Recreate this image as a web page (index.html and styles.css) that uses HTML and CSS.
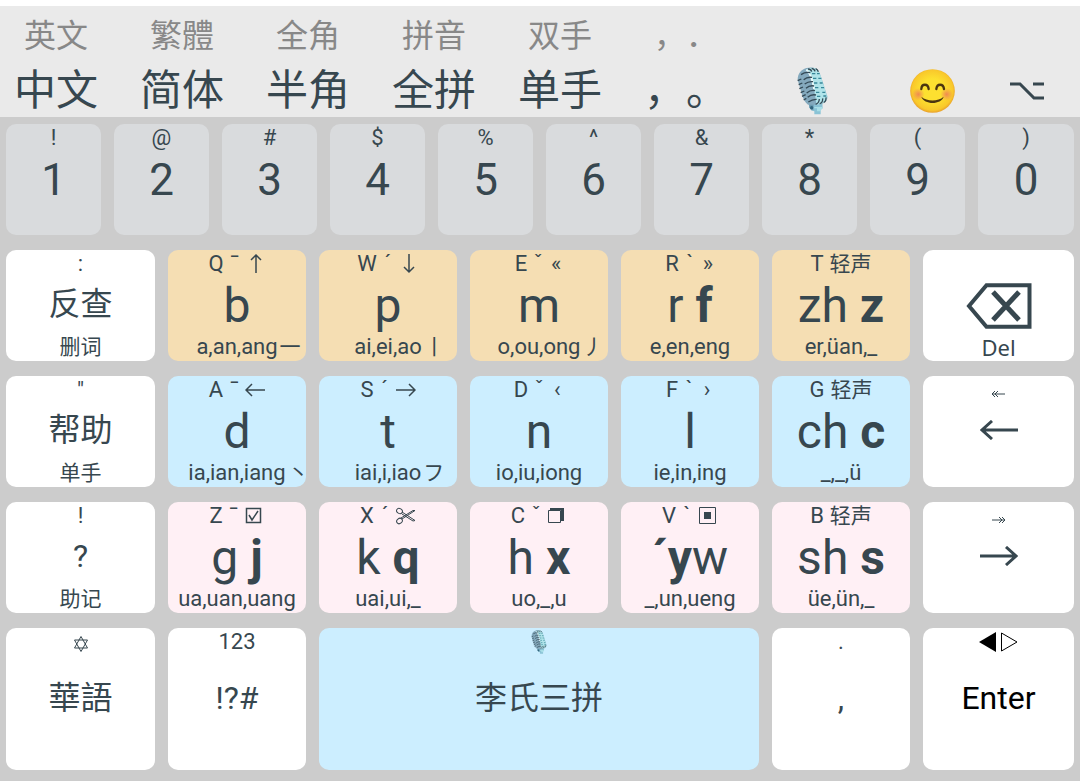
FILE: index.html
```html
<!DOCTYPE html>
<html lang="zh-CN">
<head>
<meta charset="utf-8">
<meta name="viewport" content="width=device-width, initial-scale=1">
<title>李氏三拼</title>
<link rel="stylesheet" href="styles.css">
</head>
<body>
<svg class="defs" aria-hidden="true">
  <symbol id="mic" viewBox="0 0 93 144">
    <path d="M46 110 L76 106 L77 124 L71 128 L71 142 L52 142 L52 133 L43 130 L37 122 L35 110Z" fill="#8ac3d6"/>
    <path d="M36 110 L50 112 L49 130 L43 130 L37 121Z" fill="#6b9ab0"/>
    <circle cx="44" cy="122" r="5" fill="#31647c"/>
    <path d="M52 120H76V125L71 129V133H60V124H52Z" fill="#a9dfe7"/>
    <path d="M2 38 C2 20 12 8 28 3 C45 -1 60 2 66 14 C73 30 84 66 91 88 C92 101 84 109 67 113 L33 113 C24 106 19 96 15 83Z" fill="#84a9bd"/>
    <path d="M28 8 C43 -1 60 1 66 14 C73 30 84 66 91 88 C92 101 82 111 58 113 C56 88 48 38 28 8Z" fill="#b0e4ea"/>
    <path d="M28 8 C42 20 46 40 51 66" fill="none" stroke="#eefbfc" stroke-width="5"/>
    <g fill="none" stroke="#344a56" stroke-width="4">
      <path d="M2 41L13 36M5 53L16 48M7 65L18 60M11 77L22 72M15 88L26 83M20 99L28 94M12 23Q25 14 40 17M20 38Q30 29 45 31M23 51Q35 42 48 44M27 64Q38 54 51 57M29 78Q41 68 54 71M32 91Q43 81 57 84M34 105Q47 96 59 97"/>
      <path d="M33 6Q42 6 44 14M44 4Q53 6 54 13M56 5Q62 8 64 14M56 112Q66 109 67 96M68 110Q78 107 77 94M80 106Q88 103 87 91" />
    </g>
    <g fill="none" stroke="#388799" stroke-width="4"><path d="M45 20H55M60 20H68M48 34H58M64 34H73M51 48H61M68 48H77M54 62H64M72 62H81M57 76H67M76 76H85M60 88H70M79 87H88"/></g>
  </symbol>
  <symbol id="left" viewBox="0 0 20 20"><path d="M20 10H1M7 4L1 10L7 16"/></symbol>
  <symbol id="right" viewBox="0 0 20 20"><path d="M0 10H19M13 4L19 10L13 16"/></symbol>
  <symbol id="up" viewBox="0 0 20 20"><path d="M10 19V1M5 6L10 1L15 6"/></symbol>
  <symbol id="down" viewBox="0 0 20 20"><path d="M10 0V18M5 13L10 18L15 13"/></symbol>
</svg>

<main class="keyboard">
  <div class="toolbar">
    <button class="tool"><span class="alt">英文</span><span class="current">中文</span></button>
    <button class="tool"><span class="alt" lang="zh-TW">繁體</span><span class="current">简体</span></button>
    <button class="tool"><span class="alt">全角</span><span class="current">半角</span></button>
    <button class="tool"><span class="alt">拼音</span><span class="current">全拼</span></button>
    <button class="tool"><span class="alt">双手</span><span class="current">单手</span></button>
    <button class="tool"><span class="alt">，．</span><span class="current">，。</span></button>
    <button class="tool" aria-label="语音"><span class="picture"><svg class="mic-large"><use href="#mic"/></svg></span></button>
    <button class="tool" aria-label="表情"><span class="picture">
      <svg class="smile" viewBox="0 0 135 132">
        <defs>
          <radialGradient id="face" cx=".5" cy=".48" r=".52"><stop offset=".5" stop-color="#fde030"/><stop offset=".88" stop-color="#f9c82b"/><stop offset="1" stop-color="#e8a02c"/></radialGradient>
          <radialGradient id="cheek"><stop offset="0" stop-color="#f08a52"/><stop offset="1" stop-color="#f08a52" stop-opacity="0"/></radialGradient>
        </defs>
        <ellipse cx="67.500" cy="66" rx="67" ry="65.500" fill="url(#face)"/>
        <circle cx="25" cy="76" r="19" fill="url(#cheek)"/><circle cx="110" cy="76" r="19" fill="url(#cheek)"/>
        <path d="M34 60C35 43 54 43 56 60M79 60C81 43 100 43 102 60" fill="none" stroke="#4c3510" stroke-width="7" stroke-linecap="round"/>
        <path d="M34 83C51 98 84 98 101 83C94 108 42 108 34 83Z" fill="#4c3510"/>
      </svg></span></button>
    <button class="tool" aria-label="选项"><span class="picture"><svg class="option" viewBox="0 0 34 18"><path d="M0 2H10L24 16H34M23 2H34"/></svg></span></button>
  </div>

  <div class="keys">
    <div class="row numbers">
      <button class="key"><span class="top">!</span><span class="digit">1</span></button>
      <button class="key"><span class="top">@</span><span class="digit">2</span></button>
      <button class="key"><span class="top">#</span><span class="digit">3</span></button>
      <button class="key"><span class="top">$</span><span class="digit">4</span></button>
      <button class="key"><span class="top">%</span><span class="digit">5</span></button>
      <button class="key"><span class="top">^</span><span class="digit">6</span></button>
      <button class="key"><span class="top">&amp;</span><span class="digit">7</span></button>
      <button class="key"><span class="top">*</span><span class="digit">8</span></button>
      <button class="key"><span class="top">(</span><span class="digit">9</span></button>
      <button class="key"><span class="top">)</span><span class="digit">0</span></button>
    </div>

    <div class="row">
      <button class="key"><span class="top">:</span><span class="word">反查</span><span class="bottom han">删词</span></button>
      <button class="key wheat"><span class="top"><span>Q</span><span class="tone">ˉ</span><svg class="icon"><use href="#up"/></svg></span><span class="letter">b</span><span class="bottom"><span>a,an,ang</span><span class="stroke">一</span></span></button>
      <button class="key wheat"><span class="top"><span>W</span><span class="tone">´</span><svg class="icon"><use href="#down"/></svg></span><span class="letter">p</span><span class="bottom"><span>ai,ei,ao</span><span class="stroke">丨</span></span></button>
      <button class="key wheat"><span class="top"><span>E</span><span class="tone">ˇ</span><span class="quote">«</span></span><span class="letter">m</span><span class="bottom"><span>o,ou,ong</span><span class="stroke">丿</span></span></button>
      <button class="key wheat"><span class="top"><span>R</span><span class="tone">`</span><span class="quote">»</span></span><span class="letter">r <b>f</b></span><span class="bottom"><span>e,en,eng</span></span></button>
      <button class="key wheat"><span class="top"><span>T</span><span class="han">轻声</span></span><span class="letter">zh <b>z</b></span><span class="bottom"><span>er,üan,_</span></span></button>
      <button class="key"><span class="top"></span><svg class="delete" viewBox="0 0 66 46"><path d="M20.500 2.200H63.500V43.800H20.500L3 23Z" stroke-width="4"/><path d="M27 9L53 37M53 9L27 37" stroke-width="5"/></svg><span class="bottom plain">Del</span></button>
    </div>

    <div class="row">
      <button class="key"><span class="top">"</span><span class="word">帮助</span><span class="bottom han">单手</span></button>
      <button class="key blue"><span class="top"><span>A</span><span class="tone">ˉ</span><svg class="icon"><use href="#left"/></svg></span><span class="letter">d</span><span class="bottom"><span>ia,ian,iang</span><span class="stroke">丶</span></span></button>
      <button class="key blue"><span class="top"><span>S</span><span class="tone">´</span><svg class="icon"><use href="#right"/></svg></span><span class="letter">t</span><span class="bottom"><span>iai,i,iao</span><span class="stroke">フ</span></span></button>
      <button class="key blue"><span class="top"><span>D</span><span class="tone">ˇ</span><span class="quote">‹</span></span><span class="letter">n</span><span class="bottom"><span>io,iu,iong</span></span></button>
      <button class="key blue"><span class="top"><span>F</span><span class="tone">`</span><span class="quote">›</span></span><span class="letter">l</span><span class="bottom"><span>ie,in,ing</span></span></button>
      <button class="key blue"><span class="top"><span>G</span><span class="han">轻声</span></span><span class="letter">ch <b>c</b></span><span class="bottom"><span>_,_,ü</span></span></button>
      <button class="key" aria-label="左"><span class="top"><svg class="tiny" viewBox="0 0 13 6"><path d="M13 3H0M3 0L0 3L3 6M6 0L3 3L6 6"/></svg></span><svg class="arrow" viewBox="0 0 38 20"><path d="M38 10H2M12 1L2 10L12 19"/></svg></button>
    </div>

    <div class="row">
      <button class="key"><span class="top">!</span><span class="word">?</span><span class="bottom han">助记</span></button>
      <button class="key pink"><span class="top"><span>Z</span><span class="tone">ˉ</span><svg class="icon" viewBox="0 0 20 20"><path d="M1.500 2.500H15.500V16.500H1.500ZM4 9L7 14L13 5"/></svg></span><span class="letter">g <b>j</b></span><span class="bottom"><span>ua,uan,uang</span></span></button>
      <button class="key pink"><span class="top"><span>X</span><span class="tone">´</span><svg class="icon" viewBox="0 0 20 20"><g stroke-width="1"><ellipse cx="3.500" cy="5" rx="3" ry="2.500" transform="rotate(30 3.500 5)"/><ellipse cx="3.500" cy="15" rx="3" ry="2.500" transform="rotate(-40 3.500 15)"/><path d="M6 6L19 14.500L17 15L6 8M6 13L19 4.500L17 4.500L5 12"/></g></svg></span><span class="letter">k <b>q</b></span><span class="bottom"><span>uai,ui,_</span></span></button>
      <button class="key pink"><span class="top"><span>C</span><span class="tone">ˇ</span><svg class="icon" viewBox="0 0 20 20"><path d="M1.500 4.500H13.500V16.500H1.500Z" stroke-width="1"/><path class="solid" d="M3 2H17V15H14V4H3Z"/></svg></span><span class="letter">h <b>x</b></span><span class="bottom"><span>uo,_,u</span></span></button>
      <button class="key pink"><span class="top"><span>V</span><span class="tone">`</span><svg class="icon" viewBox="0 0 20 20"><path d="M1.500 1.500H17.500V17.500H1.500Z" stroke-width="1"/><path class="solid" d="M6 6H13V13H6Z"/></svg></span><span class="letter"><b>´y</b>w</span><span class="bottom"><span>_,un,ueng</span></span></button>
      <button class="key pink"><span class="top"><span>B</span><span class="han">轻声</span></span><span class="letter">sh <b>s</b></span><span class="bottom"><span>üe,ün,_</span></span></button>
      <button class="key" aria-label="右"><span class="top"><svg class="tiny" viewBox="0 0 13 6"><path d="M0 3H13M10 0L13 3L10 6M7 0L10 3L7 6"/></svg></span><svg class="arrow" viewBox="0 0 38 20"><path d="M0 10H36M26 1L36 10L26 19"/></svg></button>
    </div>

    <div class="row last">
      <button class="key"><span class="top"><svg class="star" viewBox="0 0 14 16"><path d="M7 0.500L13.500 12H0.500ZM7 15.500L0.500 4H13.500Z"/></svg></span><span class="word" lang="zh-TW">華語</span></button>
      <button class="key"><span class="top">123</span><span class="word">!?#</span></button>
      <button class="key blue space"><span class="top"><svg class="mic-small"><use href="#mic"/></svg></span><span class="word">李氏三拼</span></button>
      <button class="key"><span class="top">.</span><span class="word">,</span></button>
      <button class="key enter"><span class="top"><svg class="triangles" viewBox="0 0 40 20"><path class="solid" d="M0 10L17 0V20Z"/><path d="M22.500 1L38 10L22.500 19Z"/></svg></span><span class="word">Enter</span></button>
    </div>
  </div>
</main>
</body>
</html>
```
FILE: styles.css
```css
* {
  box-sizing: border-box;
}

body {
  margin: 0;
  padding-top: 6px;
  background: #fff;
  color: #37474f;
  font-family: Roboto, "Noto Sans CJK SC", sans-serif;
}

.defs {
  position: absolute;
  width: 0;
  height: 0;
}

button {
  margin: 0;
  padding: 0;
  border: 0;
  background: none;
  color: inherit;
  font: inherit;
  cursor: pointer;
}

svg {
  display: block;
  fill: none;
  stroke: currentColor;
}

svg use[href="#mic"] {
  stroke: none;
}

.solid {
  fill: currentColor;
  stroke: none;
}

.keyboard {
  min-height: calc(100vh - 6px);
  background: #ccc;
}

.toolbar {
  display: grid;
  grid-template-columns: repeat(7, 112fr) 100fr 62fr;
  column-gap: 14px;
  padding-right: 22px;
  padding-top: 7px;
  background: #eaeaea;
}

.tool {
  display: flex;
  flex-direction: column;
  align-items: center;
  justify-content: flex-end;
  font-family: "Noto Sans CJK SC", sans-serif;
  text-spacing-trim: space-all;
  white-space: nowrap;
}

.alt {
  color: #888;
  font-size: 32px;
  line-height: 40px;
}

.current {
  margin-top: 4px;
  font-size: 42px;
  line-height: 60px;
}

.picture {
  display: grid;
  place-items: center;
  height: 52px;
}

.mic-large {
  width: 31px;
  height: 48px;
}

.smile {
  width: 45px;
  height: 44px;
  stroke: none;
}

.option {
  width: 34px;
  height: 18px;
  stroke-width: 3px;
}

.keys {
  display: grid;
  row-gap: 15px;
  padding: 7px 6px 11px;
}

.row {
  display: grid;
  grid-template-columns: 149fr repeat(5, 138fr) 151fr;
  column-gap: 13px;
}

.numbers {
  grid-template-columns: repeat(9, 95fr) 96fr;
}

.key {
  display: grid;
  grid-template-rows: 28px 1fr 28px;
  justify-items: center;
  align-items: center;
  min-height: 111px;
  min-width: 0;
  border-radius: 10px;
  background: #fff;
  white-space: nowrap;
}

.numbers .key {
  background: #d9dbdd;
}

.last .key {
  min-height: 142px;
}

.wheat {
  background: #f5deb3;
}

.blue {
  background: #cef;
}

.pink {
  background: #fff0f5;
}

.space {
  grid-column: span 3;
}

.enter {
  color: #000;
}

.top {
  display: flex;
  align-items: center;
  justify-content: center;
  gap: 6px;
  height: 28px;
  font-size: 22px;
  line-height: 28px;
}

.tone {
  width: 10px;
  text-align: center;
}

.quote {
  width: 14px;
  text-align: center;
}

.icon {
  width: 20px;
  height: 20px;
  stroke-width: 1.5;
}

.digit {
  font-size: 44px;
  line-height: 52px;
}

.letter {
  font-size: 48px;
  line-height: 54px;
}

.word {
  padding-bottom: 3px;
  font-size: 32px;
  line-height: 40px;
}

.bottom {
  display: grid;
  grid-template-columns: minmax(0, 1fr) auto minmax(0, 1fr);
  width: 100%;
  font-size: 22px;
  line-height: 28px;
}

.bottom > :first-child {
  grid-column: 2;
}

.stroke {
  padding-left: 2px;
  font-size: 21px;
  text-align: left;
}

.han {
  display: block;
  width: auto;
  font-size: 21px;
}

.plain {
  display: block;
  width: auto;
  font-family: "Noto Sans", sans-serif;
  line-height: 24px;
}

.delete {
  width: 66px;
  height: 46px;
}

.arrow {
  width: 38px;
  height: 20px;
  margin-bottom: 3px;
  stroke-width: 3px;
}

.tiny {
  width: 13px;
  height: 6px;
  margin-top: 8px;
  stroke-width: 1px;
}

.star {
  width: 14px;
  height: 16px;
  margin-top: 3px;
  stroke-width: 1px;
}

.mic-small {
  width: 16px;
  height: 24px;
}

.triangles {
  width: 40px;
  height: 20px;
  stroke-width: 1px;
}
```
